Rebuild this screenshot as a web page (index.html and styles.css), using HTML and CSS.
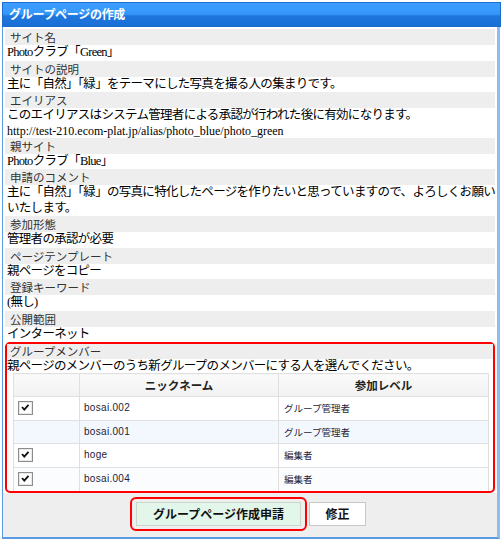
FILE: index.html
```html
<!DOCTYPE html>
<html lang="ja">
<head>
<meta charset="utf-8">
<link rel="stylesheet" href="styles.css">
</head>
<body>
<div class="panel">
  <div class="titlebar">グループページの作成</div>
  <div class="body">
    <div class="fields">
      <div class="label">サイト名</div>
      <div class="value">Photoクラブ「Green」</div>
      <div class="label">サイトの説明</div>
      <div class="value">主に「自然」「緑」をテーマにした写真を撮る人の集まりです。</div>
      <div class="label">エイリアス</div>
      <div class="value">このエイリアスはシステム管理者による承認が行われた後に有効になります。</div>
      <div class="value url">http://test-210.ecom-plat.jp/alias/photo_blue/photo_green</div>
      <div class="label">親サイト</div>
      <div class="value">Photoクラブ「Blue」</div>
      <div class="label">申請のコメント</div>
      <div class="value">主に「自然」「緑」の写真に特化したページを作りたいと思っていますので、よろしくお願いいたします。</div>
      <div class="label">参加形態</div>
      <div class="value">管理者の承認が必要</div>
      <div class="label">ページテンプレート</div>
      <div class="value">親ページをコピー</div>
      <div class="label">登録キーワード</div>
      <div class="value">(無し)</div>
      <div class="label">公開範囲</div>
      <div class="value">インターネット</div>
    </div>
    <div class="members">
      <div class="label">グループメンバー</div>
      <div class="value">親ページのメンバーのうち新グループのメンバーにする人を選んでください。</div>
      <table class="mtable">
        <thead>
          <tr><th class="c1"></th><th class="c2">ニックネーム</th><th class="c3">参加レベル</th></tr>
        </thead>
        <tbody>
          <tr><td class="c1"><svg class="cb" width="15" height="14" viewBox="0 0 15 14"><rect x="0.5" y="0.5" width="14" height="13" fill="#fff" stroke="#8c8c8c"/><rect x="1.5" y="1.5" width="12" height="11" fill="none" stroke="#e8e8e8"/><path d="M4 6 L6.3 8.6 L10.5 3.8" fill="none" stroke="#111" stroke-width="1.8"/></svg></td><td class="nick">bosai.002</td><td class="lvl">グループ管理者</td></tr>
          <tr class="alt"><td class="c1"></td><td class="nick">bosai.001</td><td class="lvl">グループ管理者</td></tr>
          <tr><td class="c1"><svg class="cb" width="15" height="14" viewBox="0 0 15 14"><rect x="0.5" y="0.5" width="14" height="13" fill="#fff" stroke="#8c8c8c"/><rect x="1.5" y="1.5" width="12" height="11" fill="none" stroke="#e8e8e8"/><path d="M4 6 L6.3 8.6 L10.5 3.8" fill="none" stroke="#111" stroke-width="1.8"/></svg></td><td class="nick">hoge</td><td class="lvl">編集者</td></tr>
          <tr class="alt2"><td class="c1"><svg class="cb" width="15" height="14" viewBox="0 0 15 14"><rect x="0.5" y="0.5" width="14" height="13" fill="#fff" stroke="#8c8c8c"/><rect x="1.5" y="1.5" width="12" height="11" fill="none" stroke="#e8e8e8"/><path d="M4 6 L6.3 8.6 L10.5 3.8" fill="none" stroke="#111" stroke-width="1.8"/></svg></td><td class="nick">bosai.004</td><td class="lvl">編集者</td></tr>
        </tbody>
      </table>
    </div>
    <div class="footer">
      <div class="hl"><button class="btn primary">グループページ作成申請</button></div>
      <button class="btn">修正</button>
    </div>
  </div>
</div>
</body>
</html>
```
FILE: styles.css
```css
* { box-sizing: border-box; }
html, body { margin: 0; padding: 0; background: #ffffff; }
body {
  font-family: "Liberation Serif", "Noto Sans CJK JP", serif;
  color: #000;
}
.panel {
  margin: 2px 0 0 2px;
  width: 499px;
  height: 537px;
  display: flex;
  flex-direction: column;
}
.titlebar {
  height: 25px;
  border: 1px solid #1e6cd0;
  background: linear-gradient(#3d9eff 0, #3597fb 11px, #2a86ee 12px, #1e76dc 13px, #1a6fd6 100%);
  color: #fff;
  font-family: "Noto Sans CJK JP", sans-serif;
  font-weight: bold;
  font-size: 12px;
  line-height: 22px;
  padding-left: 6px;
  letter-spacing: -0.3px;
}
.body {
  flex: 1;
  border-left: 1px solid #5b9be2;
  border-right: 3px solid #8fbdef;
  border-bottom: 2px solid #5b9be2;
  margin-right: 1px;
  padding: 2px 2px 0 2px;
  display: flex;
  flex-direction: column;
}
.label {
  background: #eeeeee;
  font-family: "Noto Sans CJK JP", sans-serif;
  font-size: 11.5px;
  line-height: 16px;
  height: 16px;
  padding-left: 5px;
  color: #333;
}
.value {
  font-size: 12.5px;
  line-height: 15.5px;
  padding-left: 2px;
  letter-spacing: -0.7px;
  background: #fff;
}
.value.url { font-size: 12px; letter-spacing: 0; line-height: 14px; }
.members {
  margin-top: 0;
  border: 2px solid #ff0000;
  border-radius: 5px;
  padding: 0 4px 0 0;
  background: #fff;
}
.members .label { padding-left: 3px; margin-right: -4px; height: 15px; line-height: 15px; }
.members .value { padding-left: 0; line-height: 14px; height: 14px; }
.mtable {
  margin: 0 0 0 6px;
  width: 476px;
  border-collapse: collapse;
  font-family: "Noto Sans CJK JP", sans-serif;
}
.mtable th, .mtable td {
  border: 1px solid #e0e0e0;
  height: 24px;
  padding: 0;
}
.mtable th {
  background: linear-gradient(#fafafa, #f2f2f2);
  font-size: 11.5px;
  font-weight: bold;
  color: #222;
  text-align: center;
  height: 23px;
}
.mtable .c1 { width: 66px; }
.mtable .c2 { width: 199px; }
.mtable td { font-size: 10px; color: #1d1d3a; line-height: 12px; height: 23.5px; }
.mtable td.c1 { padding-left: 4px; }
.mtable td.nick { padding-left: 4px; font-family: "Liberation Sans", sans-serif; font-size: 10px; letter-spacing: 0.3px; }
.mtable td.lvl { padding-left: 5px; font-size: 9.5px; }
.mtable tr.alt td { background: #f2f8fd; }
.mtable tr.alt2 td { background: #fbfcfe; }
.mtable tbody tr:last-child td { border-bottom: none; }
.cb { display: block; }
.footer {
  flex: 1;
  background: #eeeeee;
  margin: 0 -2px 0 -2px;
  padding: 4px 0 0 127px;
  display: flex;
  align-items: flex-start;
  gap: 2px;
}
.hl {
  border: 2px solid #ff0000;
  border-radius: 6px;
  padding: 3px 4px;
  background: #eeeeee;
}
.btn {
  font-family: "Noto Sans CJK JP", sans-serif;
  font-weight: bold;
  font-size: 12px;
  height: 24px;
  border: 1px solid #c8c8c8;
  background: #fff;
  color: #111;
  padding: 0;
  width: 57px;
  margin-top: 5px;
}
.btn.primary {
  width: 165px;
  margin-top: 0;
  background: #e2f6e9;
  border-color: #c5d8cb;
}
```
